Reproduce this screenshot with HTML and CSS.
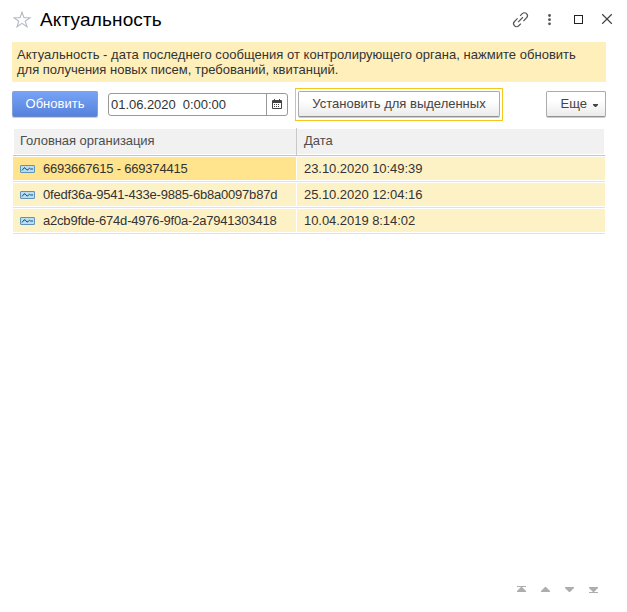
FILE: index.html
```
<!DOCTYPE html>
<html lang="ru">
<head>
<meta charset="utf-8">
<title>Актуальность</title>
<link rel="stylesheet" href="styles.css">
</head>
<body>
<main class="window">
  <header class="titlebar">
    <svg class="star" width="18" height="17" viewBox="0 0 18 17"><path d="M9 1.2L11 6.7H17L12.2 10.2L14 15.8L9 12.4L4 15.8L5.8 10.2L1 6.7H7Z" fill="none" stroke="#b4bac3" stroke-width="1.1"/></svg>
    <h1 class="title">Актуальность</h1>
    <svg class="tools" width="104" height="20" viewBox="0 0 104 20">
      <g transform="translate(10.5 9.7) rotate(-45)" fill="none" stroke="#555" stroke-width="1.2">
        <path d="M-1.2 -3H-5.5A3 3 0 0 0 -5.5 3H-2.5M1.2 3H5.5A3 3 0 0 0 5.5 -3H2.5M-3.4 0H3.4"/>
      </g>
      <g fill="#555"><circle cx="39.5" cy="5.5" r="1.4"/><circle cx="39.5" cy="9.7" r="1.4"/><circle cx="39.5" cy="13.8" r="1.4"/></g>
      <rect x="64.5" y="5.5" width="8" height="8" fill="none" stroke="#222"/>
      <path d="M92.2 4.3L101.8 13.8M101.8 4.3L92.2 13.8" stroke="#444" stroke-width="1.2"/>
    </svg>
  </header>
  <p class="notice"><span class="line1">Актуальность - дата последнего сообщения от контролирующего органа, нажмите обновить</span><br><span>для получения новых писем, требований, квитанций.</span></p>
  <div class="toolbar">
    <button class="button primary">Обновить</button>
    <div class="date-field">
      <span class="date-value">01.06.2020&nbsp; 0:00:00</span>
      <span class="picker"><svg width="10" height="10" viewBox="0 0 10 10"><path d="M2 0H3V1H7V0H8V1H9Q10 1 10 2V9Q10 10 9 10H1Q0 10 0 9V2Q0 1 1 1H2Z" fill="#444"/><path d="M1 4H9V9H1Z" fill="#fff"/><path d="M2 5.5H8M2 7.5H8" stroke="#444" stroke-dasharray="1 1"/></svg></span>
    </div>
    <div class="focus"><button class="button wide">Установить для выделенных</button></div>
    <button class="button more">Еще <svg width="5" height="3" viewBox="0 0 5 3"><path d="M0 0H5V1L3 3H2L0 1Z" fill="#444"/></svg></button>
  </div>
  <section class="table">
    <div class="row head"><div class="cell">Головная организация</div><div class="cell">Дата</div></div>
    <div class="row selected"><div class="cell"><svg class="record" width="15" height="8" viewBox="0 0 15 8"><rect x=".5" y=".5" width="14" height="7" rx=".5" fill="#b9ddf3" stroke="#5d94b8"/><path d="M2 5.5L4 3Q5 2 6 4Q7 6 8 4.5L9.5 3.3L10.5 4H13" fill="none" stroke="#174f7c"/></svg><span class="id">6693667615 - 669374415</span></div><div class="cell">23.10.2020 10:49:39</div></div>
    <div class="row"><div class="cell"><svg class="record" width="15" height="8" viewBox="0 0 15 8"><rect x=".5" y=".5" width="14" height="7" rx=".5" fill="#b9ddf3" stroke="#5d94b8"/><path d="M2 5.5L4 3Q5 2 6 4Q7 6 8 4.5L9.5 3.3L10.5 4H13" fill="none" stroke="#174f7c"/></svg><span class="id">0fedf36a-9541-433e-9885-6b8a0097b87d</span></div><div class="cell">25.10.2020 12:04:16</div></div>
    <div class="row"><div class="cell"><svg class="record" width="15" height="8" viewBox="0 0 15 8"><rect x=".5" y=".5" width="14" height="7" rx=".5" fill="#b9ddf3" stroke="#5d94b8"/><path d="M2 5.5L4 3Q5 2 6 4Q7 6 8 4.5L9.5 3.3L10.5 4H13" fill="none" stroke="#174f7c"/></svg><span class="id">a2cb9fde-674d-4976-9f0a-2a7941303418</span></div><div class="cell">10.04.2019 8:14:02</div></div>
  </section>
  <footer class="pager">
    <svg width="83" height="8" viewBox="0 0 83 8" fill="#adadad"><path d="M0 0H9V1H0ZM4 1H5L9 5V6H0V5ZM28 1H29L33 5V6H24V5ZM48 1H57V2L53 6H52L48 2ZM72 1H81V2L77 6H76L72 2ZM72 6H81V7H72Z"/></svg>
  </footer>
</main>
</body>
</html>
```
FILE: styles.css
```
* { box-sizing: border-box; }
body { margin: 0; background: #fff; color: #333; font: 13px/15px "Liberation Sans", Arial, sans-serif; }
.window { display: flex; flex-direction: column; height: 612px; overflow: hidden; }
.titlebar { display: flex; height: 42px; padding: 10px 13px 0; align-items: flex-start; }
.star { margin-top: 1px; }
.title { margin: -2px 0 0 9px; color: #000; font-size: 19px; line-height: 24px; font-weight: 400; letter-spacing: .15px; }
.tools { margin-left: auto; }
.notice { width: 594px; height: 40px; margin: 0 0 0 12px; padding: 5px 5px 0; background: #ffefbb; white-space: nowrap; }
.line1 { letter-spacing: .025px; }
.toolbar { display: flex; width: 594px; margin: 6px 0 0 12px; height: 33px; align-items: flex-start; }
.button { display: block; height: 26px; margin: 0; padding: 0 0 1px; border: 1px solid #ababab; border-bottom-color: #929292; border-radius: 2px; background: linear-gradient(#fff 35%, #ebebeb); box-shadow: 0 1px 0 #ccc; color: #444; font: inherit; text-align: center; }
.primary { width: 86px; margin-top: 3px; background: linear-gradient(#76a3f5, #5682dd); border-color: #84a0d8; border-bottom-color: #6989ca; color: #fff; }
.date-field { display: flex; width: 180px; height: 23px; margin: 5px 0 0 10px; border: 1px solid #999; border-radius: 3px; }
.date-value { width: 157px; padding: 3px 0 0 2px; letter-spacing: -.04px; }
.picker { flex: 1; border-left: 1px solid #999; padding: 5px 0 0 5px; line-height: 0; }
.focus { width: 208px; height: 33px; margin-left: 7px; padding: 2px; border: 1px solid #f2c81e; }
.wide { width: 202px; }
.more { width: 60px; margin: 3px 0 0 auto; padding-left: 6px; }
.more svg { margin: 0 0 1px 2px; }
.table { width: 592px; margin: 7px 0 0 13px; }
.row { display: flex; height: 26px; padding: 1px 0; border-bottom: 1px solid #e2e2e2; gap: 1px; }
.cell { display: flex; align-items: center; background: #fdf1c6; height: 23px; letter-spacing: -.05px; }
.cell:first-child { width: 283px; padding-left: 7px; }
.cell:last-child { flex: 1; padding-left: 7px; }
.selected .cell:first-child { background: #ffe48d; }
.record { margin-right: 8px; }
.id { letter-spacing: -.2px; }
.head { height: 28px; padding: 1px 1px 1px; border-bottom-color: #c5c5c5; gap: 0; color: #4d4d4d; }
.head .cell { background: #f1f1f1; height: 25px; padding-bottom: 2px; }
.head .cell:first-child { width: 282px; padding-left: 6px; }
.head .cell:last-child { height: 27px; margin-top: -1px; border-left: 1px solid #c9c9c9; box-shadow: inset 0 1px 0 #fff, inset 0 -1px 0 #fff; }
.pager { margin: auto 0 19px 517px; height: 7px; line-height: 0; }
```
